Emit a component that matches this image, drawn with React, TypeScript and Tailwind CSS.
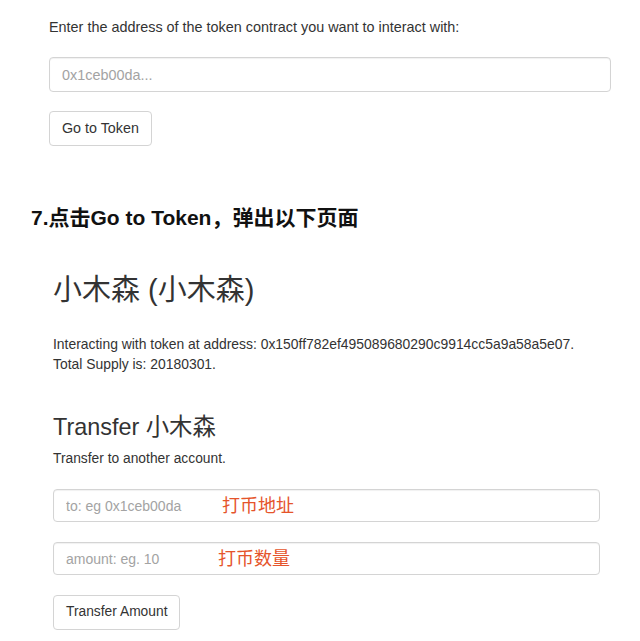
const font = { fontFamily: '"Liberation Sans", "Noto Sans CJK SC", sans-serif' }

function Field({ placeholder, note, noteLeft }: { placeholder: string; note?: string; noteLeft?: string }) {
  return (
    <div className="relative">
      <input
        className="block w-full h-[33px] px-3 text-[14px] text-[#555] rounded-[4px] border border-[#d4d4d4] shadow-[inset_0_1px_1px_rgba(0,0,0,0.06)] placeholder:text-[#a3a3a3] outline-none"
        placeholder={placeholder}
      />
      {note && (
        <span className={`absolute top-1/2 -translate-y-1/2 text-[18px] leading-none text-[#e5542b] ${noteLeft}`}>
          {note}
        </span>
      )}
    </div>
  )
}

function Button({ children, className }: { children: string; className?: string }) {
  return (
    <button
      className={`h-[35px] px-3 text-[#333] bg-white rounded-[4px] border border-[#d4d4d4] ${className || ''}`}
    >
      {children}
    </button>
  )
}

export default function App() {
  return (
    <div className="w-[640px] h-[641px] bg-white overflow-hidden" style={font}>
      <div className="pl-[49px] pr-[29px] pt-[17px]">
        <p className="text-[14.4px] leading-[20px] text-[#333]">
          Enter the address of the token contract you want to interact with:
        </p>
        <input
          className="mt-5 block w-full h-[35px] px-3 text-[14.4px] rounded-[4px] border border-[#d4d4d4] shadow-[inset_0_1px_1px_rgba(0,0,0,0.06)] placeholder:text-[#a3a3a3] outline-none"
          placeholder="0x1ceb00da..."
        />
        <Button className="mt-[19px] text-[14.3px]">Go to Token</Button>
      </div>

      <h2 className="mt-[58px] pl-[31px] text-[21px] leading-[28px] font-bold text-[#111]">
        7.点击Go to Token，弹出以下页面
      </h2>

      <div className="pl-[53px] pr-[40px]">
        <h1 className="mt-10 text-[29px] leading-[36px] text-[#333]">小木森 (小木森)</h1>
        <p className="mt-[26px] text-[13.9px] leading-[20px] text-[#333]">
          Interacting with token at address: 0x150ff782ef495089680290c9914cc5a9a58a5e07.
          <br />
          Total Supply is: 20180301.
        </p>
        <h3 className="mt-[38px] text-[23.4px] leading-[30px] text-[#333]">Transfer 小木森</h3>
        <p className="mt-[7px] text-[13.8px] leading-[20px] text-[#333]">Transfer to another account.</p>
        <div className="mt-5 flex flex-col gap-5">
          <Field placeholder="to: eg 0x1ceb00da" note="打币地址" noteLeft="left-[169px]" />
          <Field placeholder="amount: eg. 10" note="打币数量" noteLeft="left-[165px]" />
        </div>
        <Button className="mt-5 text-[13.8px]">Transfer Amount</Button>
      </div>
    </div>
  )
}
